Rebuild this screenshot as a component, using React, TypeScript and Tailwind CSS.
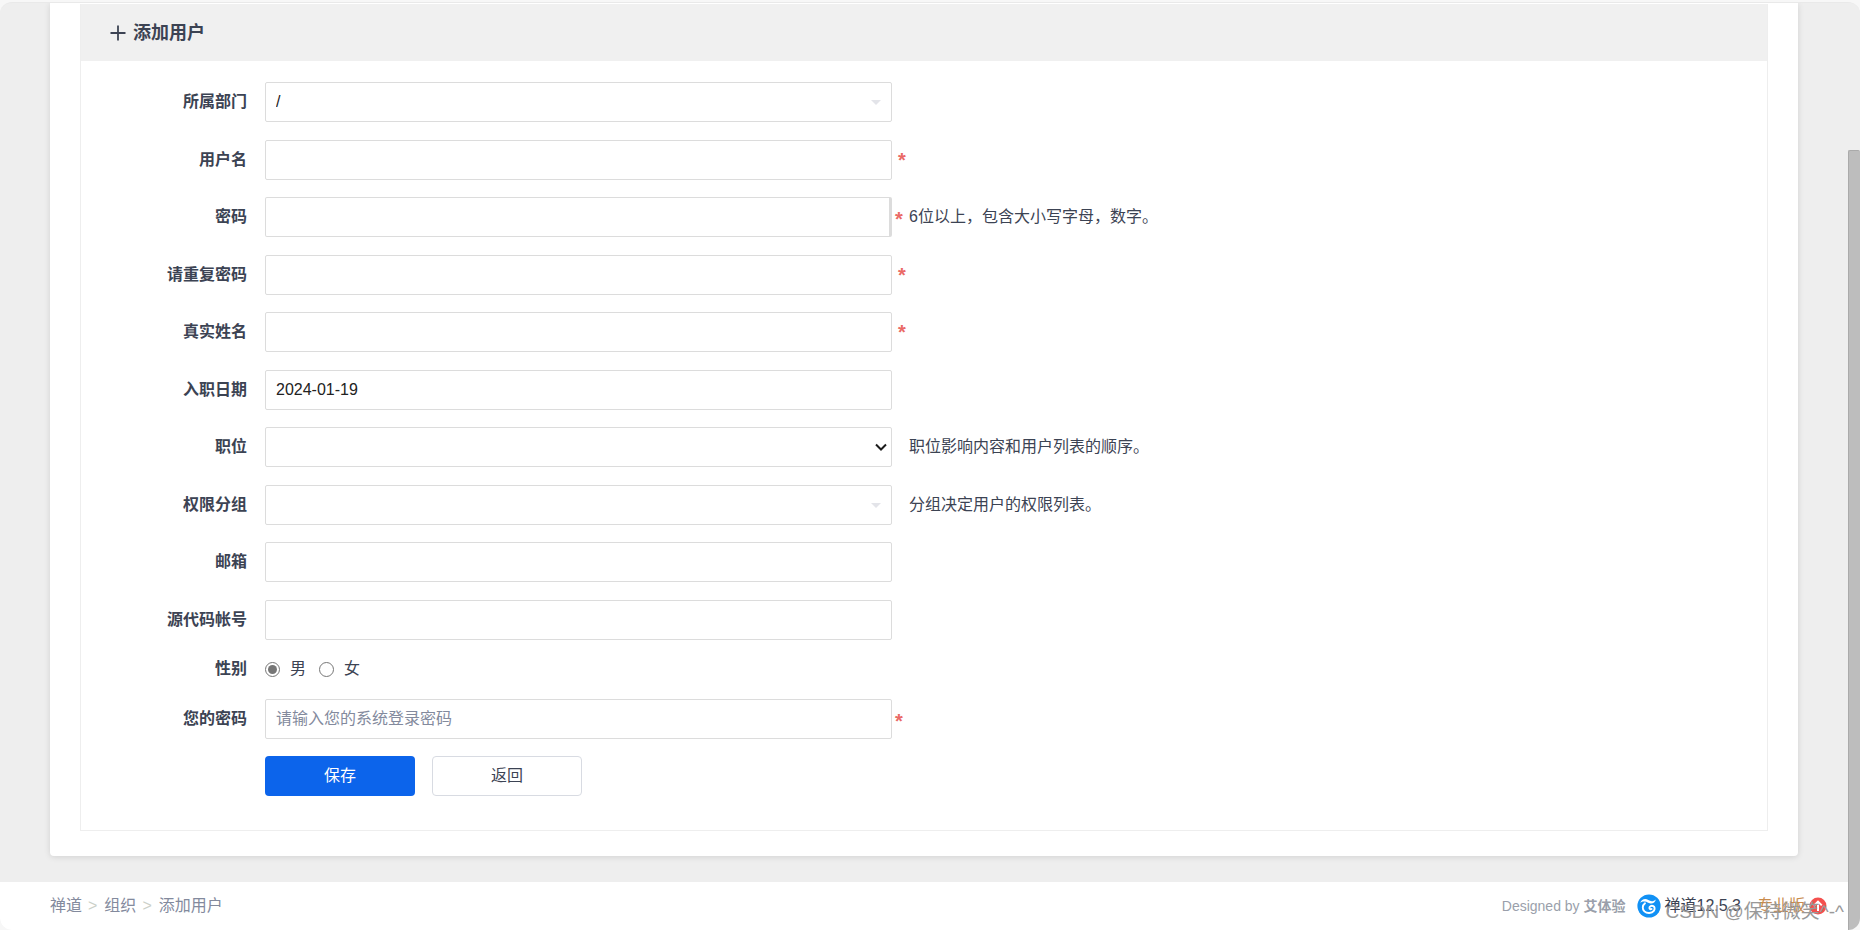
import { useState, type ReactNode } from "react";
import clsx from "clsx";

interface RowProps {
  id?: string;
  label?: string;
  required?: boolean;
  tight?: boolean;
  hint?: string;
  children: ReactNode;
}

const inputClass =
  "block h-10 w-full rounded-xs border border-[#dcdcdc] bg-white px-2.5 text-[#222] outline-none placeholder:text-[#838a9d] focus:border-[#0c64eb]";

function Row({ id, label, required, tight, hint, children }: RowProps) {
  return (
    <div className="grid grid-cols-[184px_627fr_875fr] items-center odd:mb-px">
      <label htmlFor={id} className="pr-[18px] text-right font-bold">
        {label}
      </label>
      {children}
      <div className="flex h-6 items-center">
        <span
          className={clsx(
            "w-[17px] text-xl leading-5 font-bold text-[#ea6a66]",
            tight ? "pt-1 pl-[3px]" : "pl-1.5",
          )}
        >
          {required && "*"}
        </span>
        {hint && <span>{hint}</span>}
      </div>
    </div>
  );
}

interface PickerProps {
  id: string;
  options: string[];
  native?: boolean;
}

function Picker({ id, options, native }: PickerProps) {
  return (
    <div className="relative">
      <select id={id} className={clsx(inputClass, "appearance-none")}>
        {options.map((option) => (
          <option key={option}>{option}</option>
        ))}
      </select>
      {native ? (
        <svg
          viewBox="0 0 12 8"
          className="pointer-events-none absolute top-4 right-[5px] h-2 w-3"
          fill="none"
          stroke="#1c1c1c"
          strokeWidth="2"
        >
          <path d="M1 1.5 6 6.5 11 1.5" />
        </svg>
      ) : (
        <svg
          viewBox="0 0 10 5"
          className="pointer-events-none absolute top-[18px] right-[11px] h-[5px] w-2.5"
          fill="#e3e4e9"
        >
          <path d="M0 0h10L5 5z" />
        </svg>
      )}
    </div>
  );
}

function Logo() {
  return (
    <svg viewBox="0 0 24 24" className="size-6">
      <circle cx="12" cy="12" r="11.6" fill="#1191f5" />
      <path
        d="M3.200 8.800C4.400 5.400 8.200 4 11.300 6c2.600 1.700 5.200 1.500 7.500-.6-.6 2.700-2.700 4.300-5.400 4-2.300-.2-3.400-1.700-5.500-1.900-1.800-.2-3.300.2-4.700 1.300z"
        fill="#fff"
      />
      <path
        d="M8 9.300C5.300 11.300 5 15.200 7.400 17.400c2.600 2.400 7.400 2.200 9.400-.5 1.300-1.800 1-4-.5-4.800-1.700-.9-4 .1-3.900 1.800.1 1.200 1.300 1.600 2.200 1.100"
        fill="none"
        stroke="#fff"
        strokeWidth="1.900"
        strokeLinecap="round"
      />
    </svg>
  );
}

const crumbs = ["禅道", "组织", "添加用户"];

export default function App() {
  const [gender, setGender] = useState("m");

  return (
    <div className="flex min-h-screen bg-[#f7f7f7] pt-0.5 font-['Liberation_Sans','Noto_Sans_CJK_SC',sans-serif] text-base leading-6 text-[#3c4353]">
      <div className="relative flex grow overflow-hidden rounded-xl border-t border-[#e9e9e9] bg-[#eee]">
        <div className="flex grow flex-col">
          <main className="mx-[50px] mb-[26px] grow rounded-b bg-white px-[30px] pt-px pb-[25px] shadow-[0_1px_6px_rgba(0,0,0,0.12)]">
            <form
              className="border border-t-0 border-[#eee]"
              onSubmit={(e) => e.preventDefault()}
            >
              <h2 className="flex h-[57px] items-center gap-[7px] bg-[#f0f0f0] pl-[29px] text-lg font-bold">
                <svg
                  viewBox="0 0 16 16"
                  className="size-4"
                  fill="none"
                  stroke="#3c4353"
                  strokeWidth="1.8"
                >
                  <path d="M8 .5v15M.5 8h15" />
                </svg>
                添加用户
              </h2>

              <div className="flex flex-col gap-[17px] pt-[21px] pb-[34px]">
                <Row id="dept" label="所属部门">
                  <Picker id="dept" options={["/"]} />
                </Row>
                <Row id="account" label="用户名" required>
                  <input id="account" type="text" className={inputClass} />
                </Row>
                <Row
                  id="password1"
                  label="密码"
                  required
                  tight
                  hint="6位以上，包含大小写字母，数字。"
                >
                  <input
                    id="password1"
                    type="password"
                    className={clsx(inputClass, "border-r-3")}
                  />
                </Row>
                <Row id="password2" label="请重复密码" required>
                  <input id="password2" type="password" className={inputClass} />
                </Row>
                <Row id="realname" label="真实姓名" required>
                  <input id="realname" type="text" className={inputClass} />
                </Row>
                <Row id="join" label="入职日期">
                  <input
                    id="join"
                    type="text"
                    defaultValue="2024-01-19"
                    className={inputClass}
                  />
                </Row>
                <Row id="role" label="职位" hint="职位影响内容和用户列表的顺序。">
                  <Picker id="role" options={[""]} native />
                </Row>
                <Row id="group" label="权限分组" hint="分组决定用户的权限列表。">
                  <Picker id="group" options={[""]} />
                </Row>
                <Row id="email" label="邮箱">
                  <input id="email" type="email" className={inputClass} />
                </Row>
                <Row id="commiter" label="源代码帐号">
                  <input id="commiter" type="text" className={inputClass} />
                </Row>
                <Row id="gender-m" label="性别">
                  <div className="flex gap-[13px]">
                    {[
                      { value: "m", name: "男" },
                      { value: "f", name: "女" },
                    ].map((item) => (
                      <label
                        key={item.value}
                        className="flex items-center gap-2.5"
                      >
                        <input
                          id={`gender-${item.value}`}
                          type="radio"
                          name="gender"
                          checked={gender === item.value}
                          onChange={() => setGender(item.value)}
                          className="size-[15px] accent-[#767676]"
                        />
                        {item.name}
                      </label>
                    ))}
                  </div>
                </Row>
                <Row id="verify" label="您的密码" required tight>
                  <input
                    id="verify"
                    type="password"
                    placeholder="请输入您的系统登录密码"
                    className={inputClass}
                  />
                </Row>
                <div className="flex gap-[17px] pl-[184px]">
                  <button
                    type="submit"
                    className="h-10 w-[150px] rounded bg-[#0c64eb] text-white"
                  >
                    保存
                  </button>
                  <button
                    type="button"
                    className="h-10 w-[150px] rounded border border-[#d8dbe2] bg-white"
                  >
                    返回
                  </button>
                </div>
              </div>
            </form>
          </main>

          <footer className="flex h-12 items-center justify-between bg-white pr-[21px] pl-[50px]">
            <nav className="flex gap-1.5 text-[#838a9d]">
              {crumbs.map((crumb, index) => (
                <span key={crumb} className="flex gap-[7px]">
                  {index > 0 && <span className="text-[#cbd0c8]">&gt;</span>}
                  <a href="#">{crumb}</a>
                </span>
              ))}
            </nav>
            <div className="flex items-center">
              <span className="mr-3 text-sm text-[#9a9fab]">
                Designed by{" "}
                <a href="#" className="font-bold">
                  艾体验
                </a>
              </span>
              <Logo />
              <a href="#" className="ml-[3px]">
                禅道12.5.3
              </a>
              <a
                href="#"
                className="ml-4 flex items-center gap-1 text-[#c98b4c]"
              >
                专业版
                <svg viewBox="0 0 18 18" className="size-[18px]">
                  <circle cx="9" cy="9" r="8.500" fill="#f4504e" />
                  <path
                    d="M9 14V5M5.200 8.400 9 4.600l3.800 3.800"
                    fill="none"
                    stroke="#fff"
                    strokeWidth="2"
                  />
                </svg>
              </a>
            </div>
          </footer>
        </div>

        <div className="flex w-3 flex-col bg-[#eee] pt-[147px]">
          <div className="grow rounded-t-xs border-t border-l border-[#aaa] bg-[#bdbdbd]" />
        </div>

        <p className="pointer-events-none absolute right-4 bottom-1.5 text-[19px] text-[#999]">
          CSDN @保持微笑^-^
        </p>
      </div>
    </div>
  );
}
